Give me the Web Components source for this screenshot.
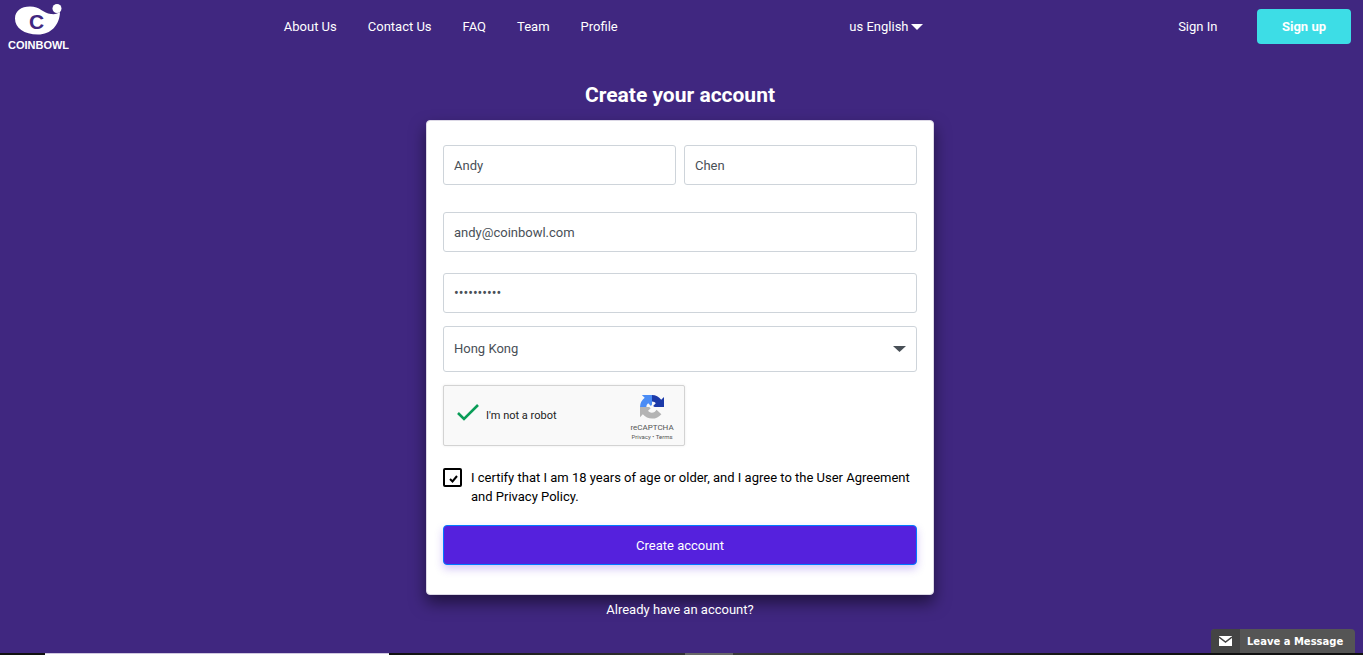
<!DOCTYPE html>
<html lang="en">
<head>
<meta charset="utf-8">
<title>Coinbowl – Create your account</title>
<style>
html, body { margin: 0; height: 100%; }
body { background: #fff; font: 13px/19px Roboto, "Liberation Sans", sans-serif; color: #fff; }
</style>
</head>
<body>
<coin-page></coin-page>
<script>
const define = (name, html) => customElements.define(name, class extends HTMLElement {
  constructor() {
    super();
    const t = document.createElement('template');
    t.innerHTML = html;
    this.attachShadow({ mode: 'open' }).append(t.content.cloneNode(true));
  }
});

define('coin-logo', `
<style>
:host { display: block; }
a { display: flex; flex-direction: column; gap: 2px; width: 61px; color: #fff; text-decoration: none; align-items: center; }
svg { display: block; }
span { font: bold 11px/13px "Liberation Sans", sans-serif; }
.mark { display: grid; place-items: center; }
.mark > * { grid-area: 1 / 1; }
.mark b { font: bold 21px/22px "Liberation Sans", sans-serif; color: #402780; padding: 4px 4px 0 0; }
</style>
<a href="#"><div class="mark"><svg width="48" height="34" viewBox="0 0 48 34"><path d="M0 15.500C0 8 6 3.500 15 3.500c10 0 13 6.500 21 7.500 4 .5 7-.5 9-2C44.500 22 36 31.500 23 31.500 9 31.500 0 25 0 15.500z" fill="#fff"/><circle cx="42" cy="5.500" r="4.500" fill="#fff"/></svg><b>C</b></div><span>COINBOWL</span></a>`);

define('nav-links', `
<style>
:host { display: block; }
nav { display: flex; gap: 31px; }
::slotted(a) { color: #fff; text-decoration: none; white-space: nowrap; }
</style>
<nav><slot></slot></nav>`);

define('lang-picker', `
<style>
:host { display: block; }
label { display: inline-flex; align-items: center; gap: 2px; }
select { appearance: none; border: 0; margin: 0; padding: 0; background: none; color: #fff; font: inherit; }
</style>
<label><select aria-label="Language"><option>us English</option></select><svg width="12" height="6" viewBox="0 0 12 6"><path d="M0 0h12L6 6z" fill="#fff"/></svg></label>`);

define('site-header', `
<style>
:host { display: grid; grid-template-columns: 276fr 566fr 329fr 173fr; padding: 3px 12px 0 8px; min-height: 51px; }
nav-links, lang-picker, .auth { align-self: start; margin-top: 14px; }
.auth { display: flex; justify-content: space-between; align-items: center; margin-top: 6px; }
.auth a { color: #fff; text-decoration: none; }
button { width: 94px; height: 35px; border: 0; border-radius: 4px; background: #3ddde6; color: #fff; font: bold 13px/19px Roboto, sans-serif; }
</style>
<coin-logo></coin-logo>
<nav-links><a href="#">About Us</a><a href="#">Contact Us</a><a href="#">FAQ</a><a href="#">Team</a><a href="#">Profile</a></nav-links>
<lang-picker></lang-picker>
<div class="auth"><a href="#">Sign In</a><button type="button">Sign up</button></div>`);

customElements.define('text-field', class extends HTMLElement {
  constructor() {
    super();
    this.attachShadow({ mode: 'open' }).innerHTML = `
<style>
:host { display: block; min-width: 0; }
input { box-sizing: border-box; width: 100%; height: 40px; border: 1px solid #ced4da; border-radius: 3px; padding: 0 10px; background: #fff; color: #495057; font: inherit; display: block; outline: 0; }
input[type=password] { font-size: 14px; }
</style><input>`;
    const i = this.shadowRoot.querySelector('input');
    i.type = this.getAttribute('type') || 'text';
    i.setAttribute('value', this.getAttribute('value'));
    i.setAttribute('aria-label', this.getAttribute('label'));
  }
});

define('country-select', `
<style>
:host { display: grid; align-items: center; }
select, svg { grid-area: 1 / 1; }
select { appearance: none; height: 46px; border: 1px solid #ced4da; border-radius: 3px; padding: 0 10px 2px; background: #fff; color: #495057; font: inherit; width: 100%; margin: 0; }
svg { justify-self: end; margin-right: 11px; pointer-events: none; }
</style>
<select aria-label="Country"><option>Hong Kong</option></select>
<svg width="13" height="6" viewBox="0 0 13 6"><path d="M0 0h13L6.500 6z" fill="#495057"/></svg>`);

define('captcha-box', `
<style>
:host { box-sizing: border-box; display: flex; align-items: center; width: 242px; height: 61px; border: 1px solid #d3d3d3; border-radius: 2px; background: #f9f9f9; box-shadow: 0 0 3px rgba(0,0,0,.08); color: #222; padding: 0 10px 0 13px; }
.ok { margin: 0 7px 6px 0; }
.msg { font-size: 11px; line-height: 13px; flex: 1; }
.brand { display: flex; flex-direction: column; align-items: center; width: 44px; padding-top: 4px; color: #555; white-space: nowrap; }
.name { font-size: 8px; line-height: 10px; margin-top: 4px; }
.terms { font-size: 6px; line-height: 8px; }
.terms a { color: inherit; text-decoration: none; }
</style>
<svg class="ok" width="22" height="18" viewBox="0 0 22 18"><path d="M1 9l6 6L21 1" fill="none" stroke="#0a9d58" stroke-width="2.600"/></svg>
<span class="msg">I'm not a robot</span>
<div class="brand">
<svg width="24" height="24" viewBox="0 0 64 64"><path d="M64 32V5l-7.500 7.500A32 32 0 0 0 32 0v17c5 0 8 2 10 5l-7 7 4 3z" fill="#1c3aa9"/><path d="M32 0H5l7.500 7.500A32 32 0 0 0 0 32h17c0-5 2-8 5-10l7 7 3-4z" fill="#4a8cf5"/><path d="M0 32v27l7.500-7.500A32 32 0 0 0 57 51L44 39c-3 5-7 8-12.500 8-5 0-8-2-10-5l7-7-4-3z" fill="#b4b4b4"/></svg>
<span class="name">reCAPTCHA</span><span class="terms"><a href="#">Privacy</a> • <a href="#">Terms</a></span></div>`);

define('agree-check', `
<style>
:host { display: block; color: #000; }
label { display: flex; gap: 9px; align-items: flex-start; }
.box { display: grid; place-items: center; flex: none; }
.box > * { grid-area: 1 / 1; }
input { appearance: none; box-sizing: border-box; width: 19px; height: 19px; margin: 0; border: 2px solid #000; border-radius: 2px; background: #fff; }
svg { pointer-events: none; margin: 2px 0 0 2px; }
</style>
<label><span class="box"><input type="checkbox" checked><svg width="9" height="8" viewBox="0 0 9 8"><path d="M1 4l2.500 2.500L8 1" fill="none" stroke="#000" stroke-width="2"/></svg></span><span><slot></slot></span></label>`);

define('signup-card', `
<style>
:host { display: block; }
form { box-sizing: border-box; display: flex; flex-direction: column; background: #fff; border: 1px solid #dcd8e6; border-radius: 4px; padding: 24px 16px 29px; box-shadow: 0 8px 16px rgba(0,0,0,.5); }
.names { display: grid; grid-template-columns: 1fr 1fr; gap: 8px; margin-bottom: 27px; }
.email { margin-bottom: 21px; }
.pass, country-select { margin-bottom: 13px; }
captcha-box { margin-bottom: 22px; }
agree-check { margin-bottom: 19px; }
button { height: 40px; border: 1px solid #007bff; border-radius: 4px; background: #5521dd; color: #fff; font: inherit; box-shadow: 0 4px 8px rgba(85,33,221,.25); padding: 0; }
</style>
<form>
<div class="names"><text-field label="First name" value="Andy"></text-field><text-field label="Last name" value="Chen"></text-field></div>
<text-field class="email" type="email" label="Email" value="andy@coinbowl.com"></text-field>
<text-field class="pass" type="password" label="Password" value="abcdefghij"></text-field>
<country-select></country-select>
<captcha-box></captcha-box>
<agree-check>I certify that I am 18 years of age or older, and I agree to the User Agreement and Privacy Policy.</agree-check>
<button type="button">Create account</button>
</form>`);

define('message-tab', `
<style>
:host { display: block; }
button { display: flex; align-items: stretch; padding: 0; border: 0; width: 144px; height: 24px; border-radius: 4px 4px 0 0; overflow: hidden; background: #555; color: #fff; font: bold 10px/25px "DejaVu Sans", sans-serif; }
.icon { display: grid; place-items: center; width: 29px; background: #444; }
.text { flex: 1; padding-left: 7px; text-align: left; white-space: nowrap; }
</style>
<button type="button"><span class="icon"><svg width="13" height="10" viewBox="0 0 13 10"><path d="M0 0h13v10H0z" fill="#fff"/><path d="M0 1l6.500 5L13 1" fill="none" stroke="#444" stroke-width="1.500"/></svg></span><span class="text"><slot></slot></span></button>`);

define('task-strip', `
<style>
:host { display: grid; grid-template-columns: 45fr 344fr 296fr 48fr 630fr; height: 2px; background: #111; }
.win { background: linear-gradient(#d0c8e0 50%, #fff 50%); }
.dim { background: linear-gradient(90deg, #111, #333); }
.tab { background: #666; }
.end { background: linear-gradient(90deg, #3a3a3a, #111 60%); }
</style>
<i></i><i class="win"></i><i class="dim"></i><i class="tab"></i><i class="end"></i>`);

define('coin-page', `
<style>
:host { box-sizing: border-box; display: flex; flex-direction: column; min-height: 100%; padding: 0 1px 3px 0; }
.bg { background: #402780; flex: 1; display: flex; flex-direction: column; }
main { width: 508px; max-width: 100%; margin: 0 auto; padding-right: 3px; display: flex; flex-direction: column; }
h1 { font-size: 21px; line-height: 24px; margin: 29px 0 13px; text-align: center; }
.have { color: #fff; text-decoration: none; margin-top: 5px; text-align: center; }
message-tab { margin: auto 8px 0 auto; }
</style>
<div class="bg">
<site-header></site-header>
<main><h1>Create your account</h1><signup-card></signup-card><a class="have" href="#">Already have an account?</a></main>
<message-tab>Leave a Message</message-tab>
</div>
<task-strip></task-strip>`);
</script>
</body>
</html>
